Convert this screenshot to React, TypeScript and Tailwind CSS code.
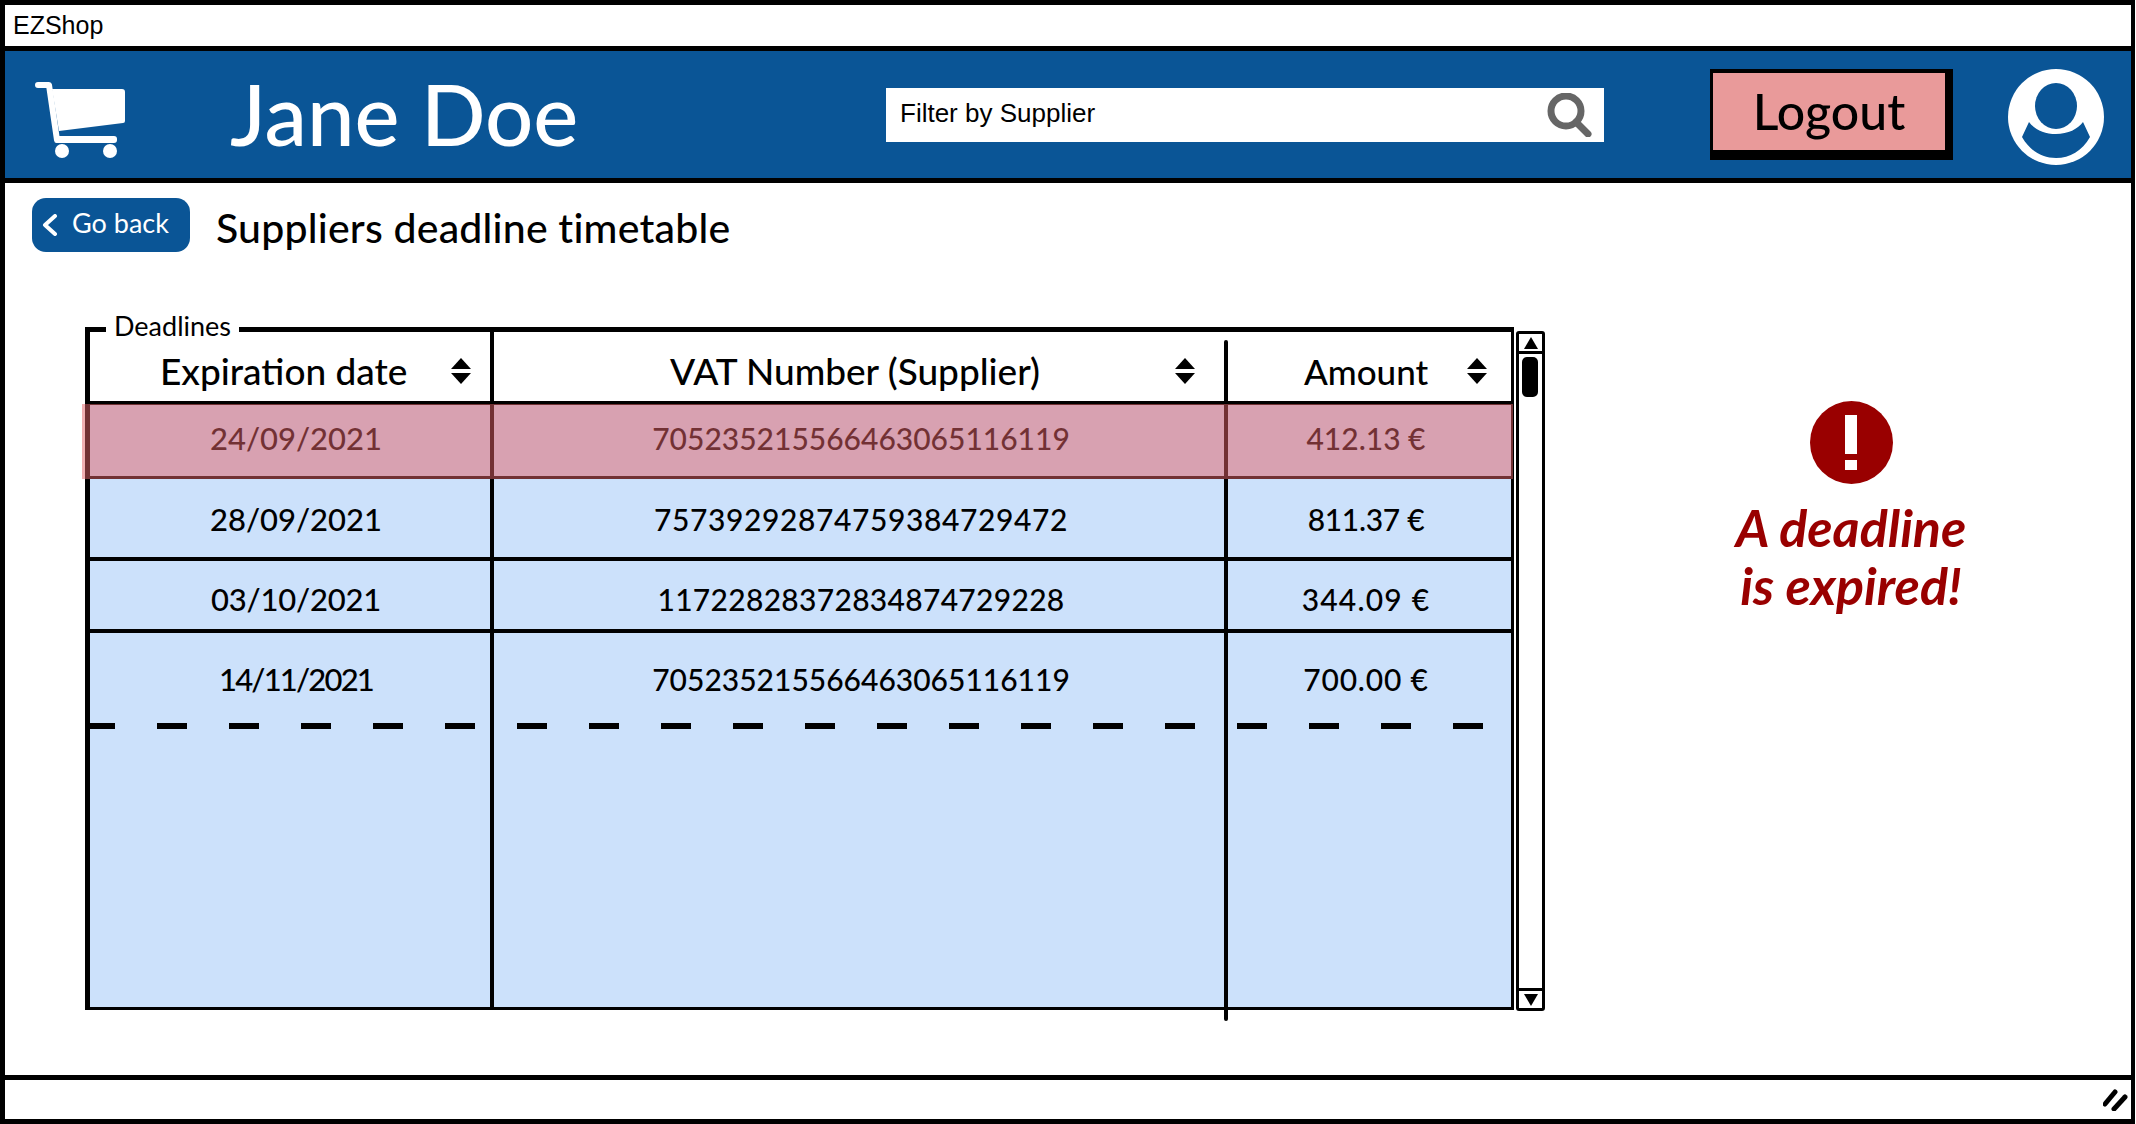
const rows = [
  { date: '24/09/2021', dateTrack: '', vat: '705235215566463065116119', track: '', amount: '412.13 €', amountTrack: '', h: 'h-[74px] border-b-[3px] pb-[5px]' },
  { date: '28/09/2021', dateTrack: '', vat: '75739292874759384729472', track: 'tracking-[0.6px]', amount: '811.37 €', amountTrack: 'tracking-[-0.3px]', h: 'h-[82px] border-b-4 pt-[2px]' },
  { date: '03/10/2021', dateTrack: 'tracking-[-0.2px]', vat: '11722828372834874729228', track: 'tracking-[0.3px]', amount: '344.09 €', amountTrack: 'tracking-[1.2px]', h: 'h-[72px] border-b-4 pt-[8px]' },
  { date: '14/11/2021', dateTrack: 'tracking-[-1.8px]', vat: '705235215566463065116119', track: '', amount: '700.00 €', amountTrack: 'tracking-[0.8px]', h: 'h-[90px] pt-[2px]' },
];

function SortIcon() {
  return (
    <svg width="20" height="26" viewBox="0 0 20 26" className="shrink-0">
      <path d="M10 0 L20 11 L0 11 Z" fill="#000" />
      <path d="M0 15 L20 15 L10 26 Z" fill="#000" />
    </svg>
  );
}

function Cart() {
  return (
    <svg width="90" height="76" viewBox="0 0 90 76" className="shrink-0 mt-[10px]">
      <path d="M3 3 H14 L22 58" fill="none" stroke="#fff" strokeWidth="6" strokeLinecap="round" strokeLinejoin="round" />
      <path d="M17 7 H87 Q90 7 90 10 V39 Q90 41 88 41 L24 49 Z" fill="#fff" />
      <rect x="20" y="54" width="62" height="7" rx="3" fill="#fff" />
      <ellipse cx="27" cy="69" rx="7" ry="7" fill="#fff" />
      <ellipse cx="75" cy="69" rx="7" ry="7" fill="#fff" />
    </svg>
  );
}

function Avatar() {
  return (
    <svg width="96" height="96" viewBox="0 0 96 96" className="shrink-0 mt-[4px]">
      <circle cx="48" cy="48" r="48" fill="#fff" />
      <ellipse cx="48" cy="37" rx="21" ry="23" fill="#0a5596" />
      <path d="M21 53 L14 68 C22 82 34 89 48 89 C62 89 74 82 82 68 L75 53 C70 60 60 65 48 65 C36 65 26 60 21 53 Z" fill="#0a5596" />
    </svg>
  );
}

export default function App() {
  return (
    <div className="w-[2135px] h-[1124px] flex flex-col bg-white border-[5px] border-r-4 border-black font-['Lato',sans-serif] text-black overflow-hidden">
      {/* title bar */}
      <div className="h-[41px] shrink-0 flex items-center pl-2 text-[25px] font-['Liberation_Sans',sans-serif]">EZShop</div>

      {/* header */}
      <div className="h-[137px] shrink-0 flex items-center pl-[30px] bg-[#0a5596] border-y-[5px] border-black">
        <Cart />
        <div className="w-[655px] ml-[105px] pb-[2px] text-white text-[85px] leading-none font-medium whitespace-nowrap">Jane Doe</div>
        <div className="ml-[1px] w-[718px] h-[54px] bg-white flex items-center justify-between pl-[14px] pr-[12px]">
          <span className="pb-[2px] text-[26px] tracking-[0px] font-['Liberation_Sans',sans-serif]">Filter by Supplier</span>
          <svg width="45" height="44" viewBox="0 0 45 44">
            <circle cx="19" cy="18" r="15" fill="none" stroke="#666" strokeWidth="7" />
            <path d="M29 29 L41 41" stroke="#666" strokeWidth="7" strokeLinecap="round" />
          </svg>
        </div>
        <div className="ml-[106px] w-[243px] h-[91px] bg-black pl-[3px] pt-[4px] pr-[8px] pb-[10px]">
          <div className="h-full pb-[2px] bg-[#e99a9a] flex items-center justify-center text-[50px] leading-none font-medium">Logout</div>
        </div>
        <div className="ml-[55px]"><Avatar /></div>
      </div>

      {/* body */}
      <div className="flex-1 min-h-0 pt-[15px]">
        <div className="flex items-center pl-[27px]">
          <button className="w-[158px] h-[54px] rounded-[14px] bg-[#0a5596] text-white text-[27px] flex items-center pl-[9px] gap-[14px]">
            <svg width="17" height="22" viewBox="0 0 17 22">
              <path d="M14 2 L4 11 L14 20" fill="none" stroke="#fff" strokeWidth="4" strokeLinecap="round" strokeLinejoin="round" />
            </svg>
            <span className="pb-[4px]">Go back</span>
          </button>
          <h1 className="ml-[26px] pt-[4px] text-[41px] tracking-[0.2px] font-medium leading-none whitespace-nowrap">Suppliers deadline timetable</h1>
        </div>

        <div className="flex items-start pl-[80px] mt-[75px]">
          {/* table */}
          <div className="relative w-[1429px] h-[683px] border-[5px] border-r-[3px] border-b-[3px] border-black bg-[#cce1fb] text-[30px] font-medium">
            <div className="absolute -top-[21px] left-[16px] px-[8px] bg-white text-[27px] leading-[30px] font-normal">Deadlines</div>

            <div className="flex h-[73px] bg-white border-b-4 border-black pt-[9px]">
              <div className="w-[404px] flex items-center justify-between pl-[70px] pr-[23px] text-[37px]">
                <span>Expiration date</span>
                <SortIcon />
              </div>
              <div className="w-[734px] flex items-center justify-between pl-[176px] pr-[33px] text-[37px]">
                <span>VAT Number (Supplier)</span>
                <SortIcon />
              </div>
              <div className="flex-1 flex items-center justify-between pl-[76px] pr-[24px] text-[35px]">
                <span>Amount</span>
                <SortIcon />
              </div>
            </div>

            {rows.map((row) => (
              <div key={row.date} className={`flex items-center border-black ${row.h}`}>
                <div className={`w-[404px] pl-[8px] text-center text-[31px] ${row.dateTrack}`}>{row.date}</div>
                <div className={`w-[734px] text-center ${row.track}`}>{row.vat}</div>
                <div className={`flex-1 pr-[7px] text-center ${row.amountTrack}`}>{row.amount}</div>
              </div>
            ))}

            <div className="flex h-[6px]">
              <div className="w-[404px] flex gap-[42px]">
                <span className="w-[25px] bg-black" />
                {[1, 2, 3, 4, 5].map((i) => <span key={i} className="w-[30px] bg-black" />)}
              </div>
              <div className="w-[734px] pl-[23px] flex gap-[42px]">
                {[1, 2, 3, 4, 5, 6, 7, 8, 9, 10].map((i) => <span key={i} className="w-[30px] bg-black" />)}
              </div>
              <div className="flex-1 pl-[9px] flex gap-[42px]">
                {[1, 2, 3, 4].map((i) => <span key={i} className="w-[30px] bg-black" />)}
              </div>
            </div>

            <div className="absolute left-[400px] -top-[5px] -bottom-[3px] w-[4px] bg-black" />
            <div className="absolute left-[1134px] top-[8px] -bottom-[14px] w-[4px] rounded-full bg-black" />
            <div className="absolute -left-[8px] -right-[2px] top-[72px] h-[75px] bg-[#e46268]/50" />
          </div>

          {/* scrollbar */}
          <div className="ml-[2px] mt-[4px] w-[29px] h-[680px] border-[3px] border-black rounded-[3px] flex flex-col bg-white">
            <div className="h-[20px] border-b-[3px] border-black flex items-center justify-center">
              <svg width="14" height="12" viewBox="0 0 14 12"><path d="M7 0 L14 12 H0 Z" fill="#000" /></svg>
            </div>
            <div className="flex-1 pt-[3px] pl-[3px]">
              <div className="w-[16px] h-[40px] rounded-[5px] bg-black" />
            </div>
            <div className="h-[20px] border-t-[3px] border-black flex items-center justify-center">
              <svg width="14" height="12" viewBox="0 0 14 12"><path d="M0 0 H14 L7 12 Z" fill="#000" /></svg>
            </div>
          </div>

          {/* alert */}
          <div className="ml-[156px] mt-[74px] w-[300px] flex flex-col items-center text-[#990000]">
            <svg width="83" height="83" viewBox="0 0 83 83">
              <circle cx="41.5" cy="41.5" r="41.5" fill="#990000" />
              <rect x="35" y="14" width="12" height="39" fill="#fff" />
              <rect x="35" y="59" width="12" height="10" fill="#fff" />
            </svg>
            <p className="mt-[14px] text-center text-[52px] leading-[58px] font-bold italic whitespace-nowrap">A deadline<br />is expired!</p>
          </div>
        </div>
      </div>

      {/* status bar */}
      <div className="h-[44px] shrink-0 border-t-[5px] border-black flex items-center justify-end pr-[3px]">
        <svg width="25" height="22" viewBox="0 0 25 22">
          <path d="M2 15 L12 3" stroke="#000" strokeWidth="5" strokeLinecap="round" />
          <path d="M11 20 L22 8" stroke="#000" strokeWidth="5" strokeLinecap="round" />
        </svg>
      </div>
    </div>
  );
}
